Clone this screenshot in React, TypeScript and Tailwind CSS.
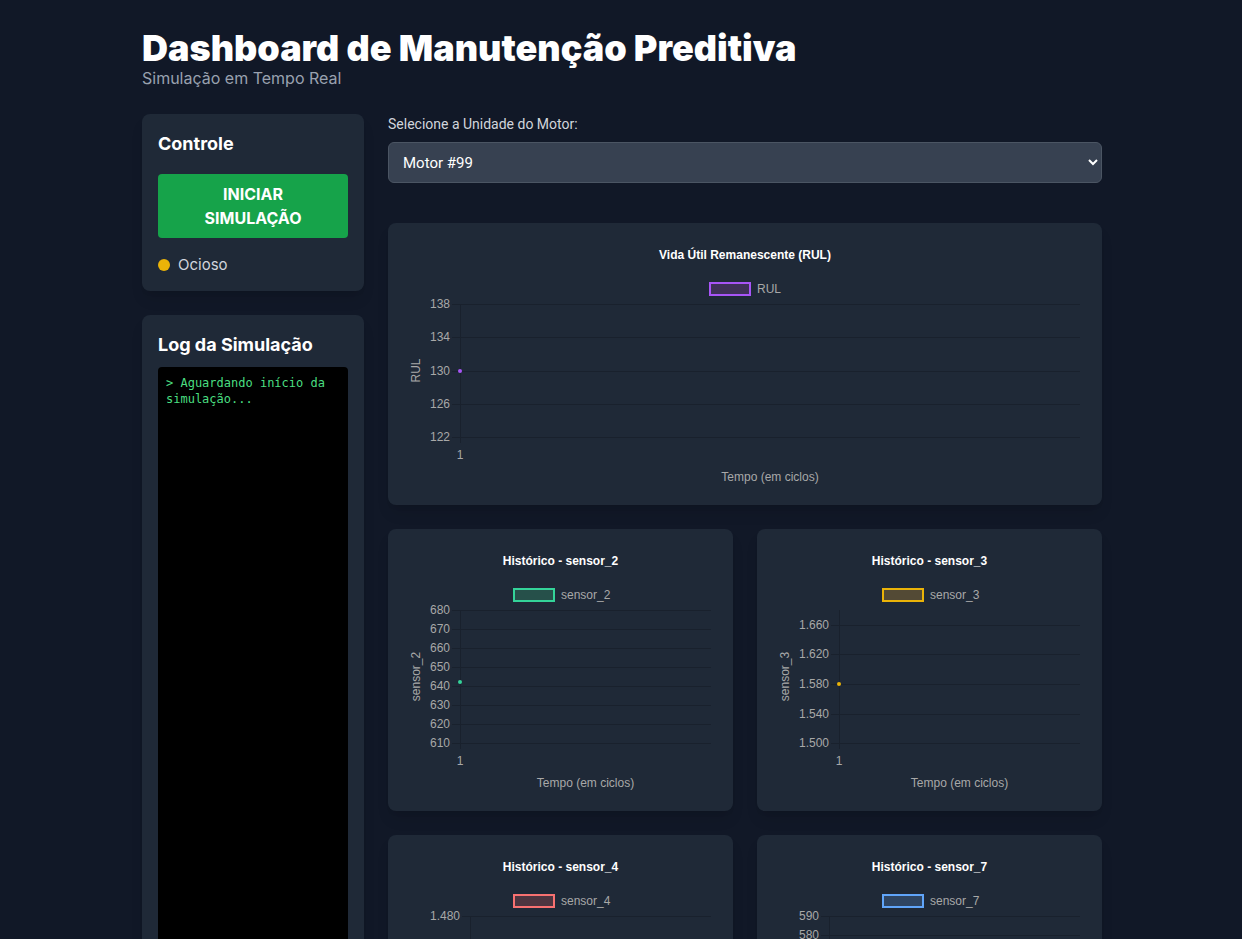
import React from "react";

type Tick = { label: string; y: number };

type ChartProps = {
  width: number;
  title: string;
  series: string;
  labelW?: number;
  stroke: string;
  fill: string;
  left: number;
  ticks: Tick[];
  axisTop?: number;
  pointY: number;
  yTitle: string;
};

const FONT = "'Liberation Sans', Arial, sans-serif";

function LineChart({
  width,
  title,
  series,
  labelW = 47,
  stroke,
  fill,
  left,
  ticks,
  axisTop = 65,
  pointY,
  yTitle,
}: ChartProps) {
  const height = 250;
  const right = width - 6;
  const bottom = 198;
  const cx = width / 2;
  // caixa da legenda + texto, centralizados juntos
  const groupW = 40 + 6 + labelW;
  const lx = Math.round(cx - groupW / 2);
  const plotMid = (left + right) / 2;

  return (
    <svg width={width} height={height} className="block" style={{ fontFamily: FONT }}>
      <text x={cx} y={20} textAnchor="middle" fontSize={12} fontWeight={700} fill="#ffffff">
        {title}
      </text>

      <rect x={lx} y={44} width={40} height={12} fill={fill} stroke={stroke} strokeWidth={2} />
      <text x={lx + 47} y={54} fontSize={12} fill="#a8a8a8">
        {series}
      </text>

      {ticks.map((t) => (
        <g key={t.label}>
          <line x1={left - 8} x2={right} y1={t.y + 0.5} y2={t.y + 0.5} stroke="#19212d" strokeWidth={1} />
          <text x={left - 10} y={t.y + 4} textAnchor="end" fontSize={12} fill="#a8a8a8">
            {t.label}
          </text>
        </g>
      ))}
      <line x1={left + 0.5} x2={left + 0.5} y1={axisTop} y2={bottom + 6} stroke="#19212d" strokeWidth={1} />
      <line x1={left} x2={right} y1={bottom + 0.5} y2={bottom + 0.5} stroke="#19212d" strokeWidth={1} />

      <circle cx={left} cy={pointY} r={2} fill={stroke} />

      <text x={left} y={220} textAnchor="middle" fontSize={12} fill="#a8a8a8">
        1
      </text>
      <text x={plotMid} y={242} textAnchor="middle" fontSize={12} fill="#a8a8a8">
        Tempo (em ciclos)
      </text>
      <text
        x={0}
        y={0}
        transform={`translate(16 ${(axisTop + bottom) / 2}) rotate(-90)`}
        textAnchor="middle"
        fontSize={12}
        fill="#a8a8a8"
      >
        {yTitle}
      </text>
    </svg>
  );
}

function ChartCard({ children }: { children: React.ReactNode }) {
  return <div className="rounded-lg bg-[#1f2937] p-4 shadow-lg">{children}</div>;
}

export default function App() {
  return (
    <div
      className="min-h-screen bg-[#111827] text-white"
      style={{ fontFamily: "Inter, 'Noto Sans', sans-serif" }}
    >
      <div className="mx-auto max-w-5xl pl-[33px] pr-[31px] pt-7">
        <header className="mb-[26px]">
          <h1 className="text-[36px] font-black leading-10">Dashboard de Manutenção Preditiva</h1>
          <p className="text-base leading-5 text-gray-400">Simulação em Tempo Real</p>
        </header>

        <div className="grid grid-cols-4 gap-6">
          {/* coluna de controle */}
          <aside className="col-span-1 flex flex-col gap-6">
            <div className="rounded-lg bg-[#1f2937] px-4 pb-[14px] pt-4 shadow-lg">
              <h2 className="mb-4 text-lg font-bold">Controle</h2>
              <button className="w-full rounded bg-[#16a34a] px-4 py-2 text-base font-bold leading-6 text-white">
                INICIAR SIMULAÇÃO
              </button>
              <div className="mt-4 flex items-center gap-2 text-gray-300">
                <span className="h-3 w-3 rounded-full bg-[#eab308]" />
                <span className="text-[15px]">Ocioso</span>
              </div>
            </div>

            <div className="rounded-lg bg-[#1f2937] p-4 shadow-lg">
              <h2 className="mb-2 text-lg font-bold">Log da Simulação</h2>
              <div
                className="h-[620px] rounded bg-black p-2 text-xs leading-4 text-[#4ade80]"
                style={{ fontFamily: "'DejaVu Sans Mono', 'Liberation Mono', monospace" }}
              >
                &gt; Aguardando início da simulação...
              </div>
            </div>
          </aside>

          {/* coluna de gráficos */}
          <main className="col-span-3 flex flex-col">
            <label className="mb-2 block text-sm text-gray-300" style={{ fontFamily: "Roboto, sans-serif" }}>
              Selecione a Unidade do Motor:
            </label>
            <select
              className="h-[41px] w-full rounded-md border border-[#4b5563] bg-[#374151] pl-[10px] pr-3 text-[15px] text-white"
              style={{ fontFamily: "Roboto, sans-serif" }}
              defaultValue="99"
            >
              <option value="99">Motor #99</option>
            </select>

            <div className="mt-10 flex flex-col gap-6">
              <ChartCard>
                <LineChart
                  width={682}
                  title="Vida Útil Remanescente (RUL)"
                  series="RUL"
                  labelW={24}
                  stroke="#a855f7"
                  fill="#3f3158"
                  left={56}
                  ticks={[
                    { label: "138", y: 65 },
                    { label: "134", y: 98 },
                    { label: "130", y: 132 },
                    { label: "126", y: 165 },
                    { label: "122", y: 198 },
                  ]}
                  pointY={132}
                  yTitle="RUL"
                />
              </ChartCard>

              <div className="grid grid-cols-2 gap-6">
                <ChartCard>
                  <LineChart
                    width={313}
                    title="Histórico - sensor_2"
                    series="sensor_2"
                    stroke="#34d399"
                    fill="#26504a"
                    left={56}
                    ticks={["680", "670", "660", "650", "640", "630", "620", "610"].map((l, i) => ({
                      label: l,
                      y: Math.round(65 + i * 19),
                    }))}
                    pointY={137}
                    yTitle="sensor_2"
                  />
                </ChartCard>
                <ChartCard>
                  <LineChart
                    width={313}
                    title="Histórico - sensor_3"
                    series="sensor_3"
                    stroke="#eab308"
                    fill="#534a35"
                    left={66}
                    ticks={[
                      { label: "1.660", y: 80 },
                      { label: "1.620", y: 109 },
                      { label: "1.580", y: 139 },
                      { label: "1.540", y: 169 },
                      { label: "1.500", y: 198 },
                    ]}
                    pointY={139}
                    yTitle="sensor_3"
                  />
                </ChartCard>
              </div>

              <div className="grid grid-cols-2 gap-6">
                <ChartCard>
                  <LineChart
                    width={313}
                    title="Histórico - sensor_4"
                    series="sensor_4"
                    stroke="#f87171"
                    fill="#4d3540"
                    left={66}
                    ticks={[
                      { label: "1.480", y: 65 },
                      { label: "1.470", y: 98 },
                      { label: "1.460", y: 132 },
                      { label: "1.450", y: 165 },
                      { label: "1.440", y: 198 },
                    ]}
                    pointY={132}
                    yTitle="sensor_4"
                  />
                </ChartCard>
                <ChartCard>
                  <LineChart
                    width={313}
                    title="Histórico - sensor_7"
                    series="sensor_7"
                    stroke="#60a5fa"
                    fill="#2f4562"
                    left={56}
                    ticks={["590", "580", "570", "560", "550", "540", "530", "520"].map((l, i) => ({
                      label: l,
                      y: Math.round(65 + i * 19),
                    }))}
                    pointY={123}
                    yTitle="sensor_7"
                  />
                </ChartCard>
              </div>
            </div>
          </main>
        </div>
      </div>
    </div>
  );
}
